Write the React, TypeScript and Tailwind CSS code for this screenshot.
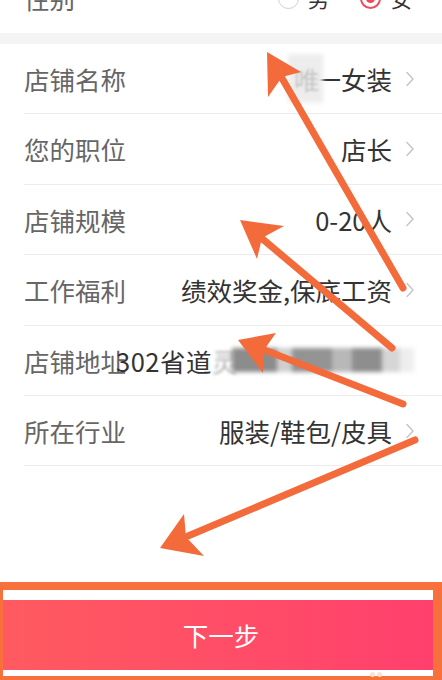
import React from "react";

const font = { fontFamily: '"Noto Sans CJK SC", "Noto Sans", sans-serif' };

function Chevron() {
  return (
    <svg width="10" height="16" viewBox="0 0 10 16" className="shrink-0">
      <path d="M2 1.5 L8 8 L2 14.5" fill="none" stroke="#c4c4c4" strokeWidth="1.4" strokeLinecap="round" strokeLinejoin="round" />
    </svg>
  );
}

function Row({ label, value }: { label: string; value: string }) {
  return (
    <div className="ml-6 h-[70.4px] flex items-center justify-between border-b border-[#ececec] pr-[27px]">
      <span className="text-[25.5px] text-[#666] leading-none">{label}</span>
      <div className="flex items-center gap-[13px]">
        <span className="text-[25.5px] text-[#333] leading-none">{value}</span>
        <Chevron />
      </div>
    </div>
  );
}

export default function App() {
  return (
    <div className="relative w-[442px] h-[680px] overflow-hidden bg-white flex flex-col" style={font}>
      {/* gender row */}
      <div className="h-[70px] mt-[-37px] shrink-0 flex items-center justify-between pl-6 pr-[30px]">
        <span className="text-[25.5px] text-[#666] leading-none">性别</span>
        <div className="flex items-center">
          <span className="w-[21px] h-[21px] rounded-full border-[1.5px] border-[#cfcfcf]" />
          <span className="ml-[9px] text-[21px] text-[#333] leading-none">男</span>
          <span className="ml-[31px] w-[21px] h-[21px] rounded-full border-2 border-[#f04a5c] flex items-center justify-center">
            <span className="w-[9px] h-[9px] rounded-full bg-[#f04a5c]" />
          </span>
          <span className="ml-[10px] text-[21px] text-[#333] leading-none">女</span>
        </div>
      </div>
      <div className="h-[11px] shrink-0 bg-[#f4f4f4]" />

      {/* shop name row with blurred char */}
      <div className="ml-6 h-[70.4px] flex items-center justify-between border-b border-[#ececec] pr-[27px]">
        <span className="text-[25.5px] text-[#666] leading-none">店铺名称</span>
        <div className="flex items-center gap-[13px]">
          <div className="flex items-center">
            <span className="relative text-[25.5px] text-[#c4c4c4] leading-none mr-[-4px]">
              <span className="absolute left-[-6px] right-[-4px] top-[-12px] bottom-[-12px] bg-[#ededed] blur-[2px]" />
              <span className="relative blur-[1px]">唯</span>
            </span>
            <span className="text-[25.5px] text-[#333] leading-none">一女装</span>
          </div>
          <Chevron />
        </div>
      </div>
      <Row label="您的职位" value="店长" />
      <Row label="店铺规模" value="0-20人" />
      <Row label="工作福利" value="绩效奖金,保底工资" />

      {/* address row */}
      <div className="ml-6 h-[70.4px] flex items-center border-b border-[#ececec] overflow-hidden">
        <span className="text-[25.5px] text-[#666] leading-none shrink-0">店铺地址</span>
        <span className="ml-[-10px] text-[25.5px] text-[#333] leading-none shrink-0 tracking-[0.5px]">302省道</span>
        <div className="relative shrink-0 flex items-center">
          <span className="text-[25.5px] text-[#b0b0b0] leading-none blur-[1.5px]">灵</span>
        </div>
        <div className="flex items-center h-[24px] ml-[-6px] blur-[2px]">
          <div className="w-[45px] h-[24px] bg-[#8c8c8c]" />
          <div className="w-[15px] h-[24px] bg-[#cfcfcf]" />
          <div className="w-[40px] h-[24px] bg-[#939393]" />
          <div className="w-[20px] h-[24px] bg-[#b8b8b8]" />
          <div className="w-[30px] h-[24px] bg-[#8e8e8e]" />
          <div className="w-[18px] h-[24px] bg-[#d6d6d6]" />
          <div className="w-[14px] h-[24px] bg-[#eeeeee]" />
        </div>
      </div>
      <Row label="所在行业" value="服装/鞋包/皮具" />

      <div className="flex-1" />

      <div className="h-[70px] shrink-0 bg-gradient-to-r from-[#ff5a60] to-[#ff3f6d] flex items-center justify-center">
        <span className="text-[25.5px] text-white leading-none">下一步</span>
      </div>
      <div className="h-[10px] shrink-0" />

      {/* annotation rectangle */}
      <div className="absolute left-0 top-[582px] w-[442px] h-[98px] border-t-[8px] border-l-[3px] border-r-[9px] border-b-[4px] border-[#f8703c] pointer-events-none" />

      {/* watermark dots */}
      <div className="absolute left-[370px] top-[672px] flex gap-[2px] pointer-events-none">
        <span className="w-[5px] h-[5px] rounded-full bg-[#fde0d0]" />
        <span className="w-[5px] h-[5px] rounded-full bg-[#fde0d0]" />
      </div>

      {/* annotation arrows */}
      <svg className="absolute left-0 top-0 pointer-events-none" width="442" height="680" viewBox="0 0 442 680">
        <g stroke="#f36b3a" strokeWidth="7" strokeLinecap="round" fill="none">
          <line x1="403" y1="288" x2="279" y2="73" />
          <line x1="392" y1="348" x2="259" y2="236" />
          <line x1="403" y1="404" x2="262" y2="349" />
          <line x1="415" y1="440" x2="188" y2="536" />
        </g>
        <g fill="#f36b3a">
          <polygon points="267,52 301,72 282,77 268,97" />
          <polygon points="240,220 284,226 262,238 257,259" />
          <polygon points="238,340 276,333 264,350 263,373" />
          <polygon points="160,548 184,514 186,537 204,556" />
        </g>
      </svg>
    </div>
  );
}
